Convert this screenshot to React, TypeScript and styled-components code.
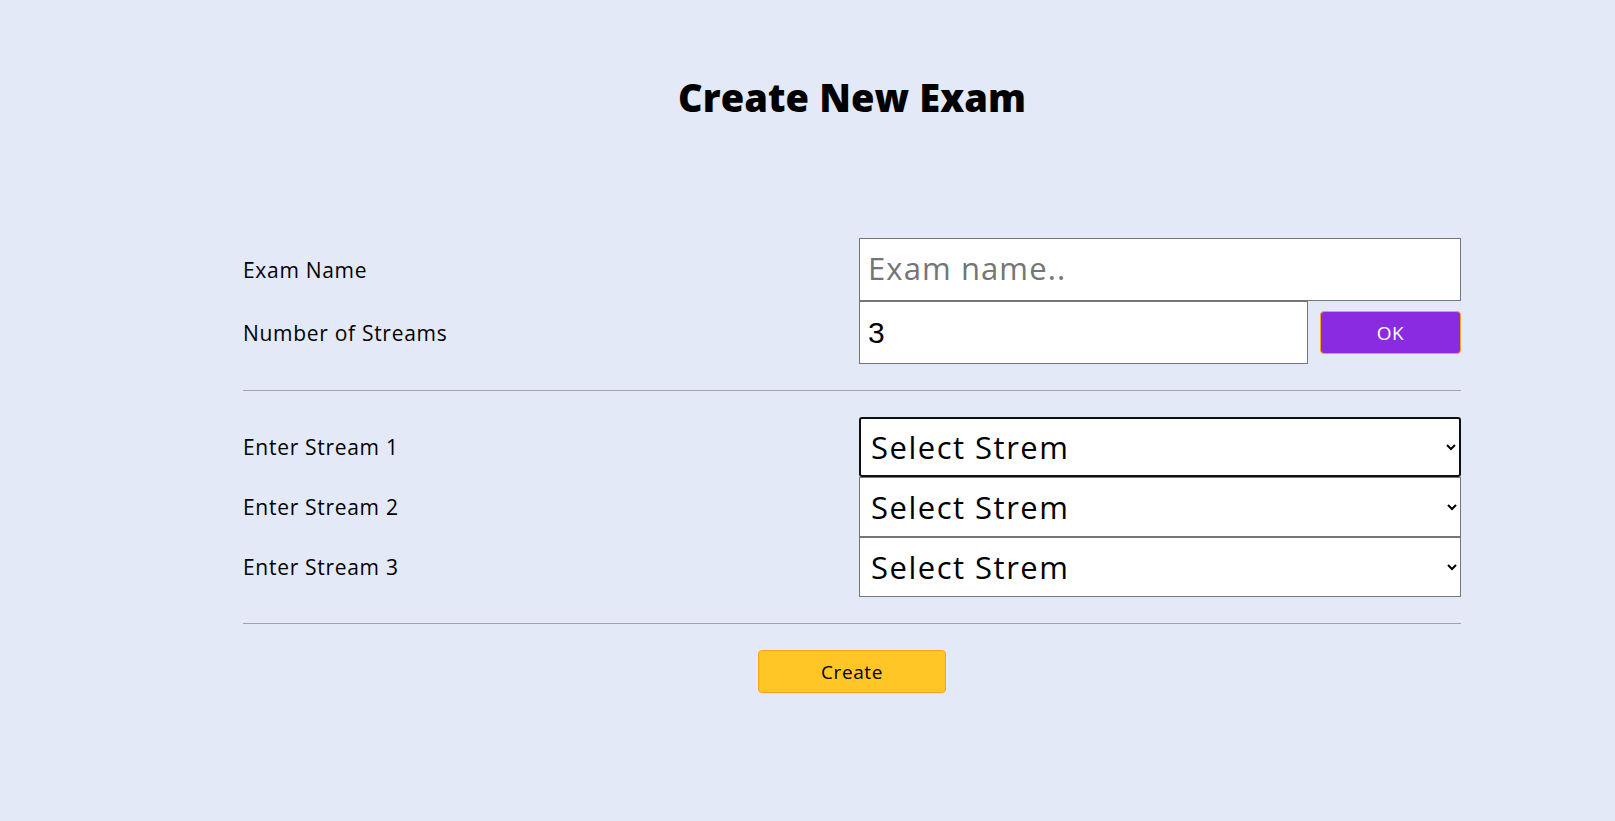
import React from "react";
import styled, { createGlobalStyle } from "styled-components";

const Global = createGlobalStyle`
  html, body { margin: 0; padding: 0; }
  body {
    background: #e3e9f7;
    font-family: "Open Sans", "Noto Sans", sans-serif;
    color: #000;
  }
`;

const Page = styled.div`
  min-height: 821px;
  box-sizing: border-box;
  padding: 72px 154px 0 243px;
`;

const Title = styled.h1`
  margin: 0;
  text-align: center;
  font-size: 38px;
  font-weight: 800;
  line-height: 50px;
  letter-spacing: 0.1px;
`;

const Form = styled.div`
  margin-top: 116px;
  display: flex;
  flex-direction: column;
`;

const Grid = styled.div`
  display: grid;
  grid-template-columns: 616px 602px;
`;

const Label = styled.label<{ $h: number }>`
  display: flex;
  align-items: center;
  font-size: 21px;
  letter-spacing: 0.7px;
  height: ${(p) => p.$h}px;
`;

const Field = styled.div`
  display: flex;
  align-items: center;
  gap: 12px;
`;

const TextInput = styled.input<{ $grow?: boolean }>`
  box-sizing: border-box;
  height: 63px;
  width: ${(p) => (p.$grow ? "449px" : "100%")};
  margin: 0;
  border: 1px solid #767676;
  border-radius: 0;
  background: #fff;
  padding: 0 8px;
  font-family: "Liberation Sans", Arial, sans-serif;
  font-size: 30px;
  color: #000;
  outline: none;
  &::placeholder {
    font-family: "Open Sans", sans-serif;
    font-size: 31px;
    letter-spacing: 1.1px;
    color: #757575;
  }
`;

const Button = styled.button<{ $variant: "ok" | "create" }>`
  box-sizing: border-box;
  height: 43px;
  width: ${(p) => (p.$variant === "ok" ? "141px" : "188px")};
  border: 1px solid #ffa21a;
  border-radius: 4px;
  background: ${(p) => (p.$variant === "ok" ? "#8a2be2" : "#ffc626")};
  color: ${(p) => (p.$variant === "ok" ? "#fff" : "#000")};
  font-family: "Open Sans", sans-serif;
  font-size: 19px;
  letter-spacing: 0.6px;
  padding: 0;
  cursor: pointer;
`;

const Divider = styled.hr`
  margin: 26px 0;
  border: none;
  border-top: 1px solid #a3a3a3;
  height: 0;
`;

const Select = styled.select<{ $focused?: boolean }>`
  box-sizing: border-box;
  width: 100%;
  height: 60px;
  margin: 0;
  background: #fff;
  color: #000;
  font-family: "Open Sans", sans-serif;
  font-size: 31px;
  letter-spacing: 1.5px;
  padding: 0 8px 0 ${(p) => (p.$focused ? "6px" : "7px")};
  border: ${(p) => (p.$focused ? "2px solid #101010" : "1px solid #767676")};
  border-radius: ${(p) => (p.$focused ? "3px" : "0")};
  outline: none;
`;

const Actions = styled.div`
  display: flex;
  justify-content: center;
`;

export default function App() {
  const streams = [1, 2, 3];
  return (
    <>
      <Global />
      <Page>
        <Title>Create New Exam</Title>
        <Form>
          <Grid>
            <Label $h={63}>Exam Name</Label>
            <Field>
              <TextInput placeholder="Exam name.." />
            </Field>
            <Label $h={63}>Number of Streams</Label>
            <Field>
              <TextInput $grow type="number" defaultValue={3} />
              <Button $variant="ok">OK</Button>
            </Field>
          </Grid>
          <Divider />
          <Grid>
            {streams.map((n) => (
              <React.Fragment key={n}>
                <Label $h={60}>Enter Stream {n}</Label>
                <Field>
                  <Select $focused={n === 1} defaultValue="">
                    <option value="">Select Strem</option>
                  </Select>
                </Field>
              </React.Fragment>
            ))}
          </Grid>
          <Divider />
          <Actions>
            <Button $variant="create">Create</Button>
          </Actions>
        </Form>
      </Page>
    </>
  );
}
